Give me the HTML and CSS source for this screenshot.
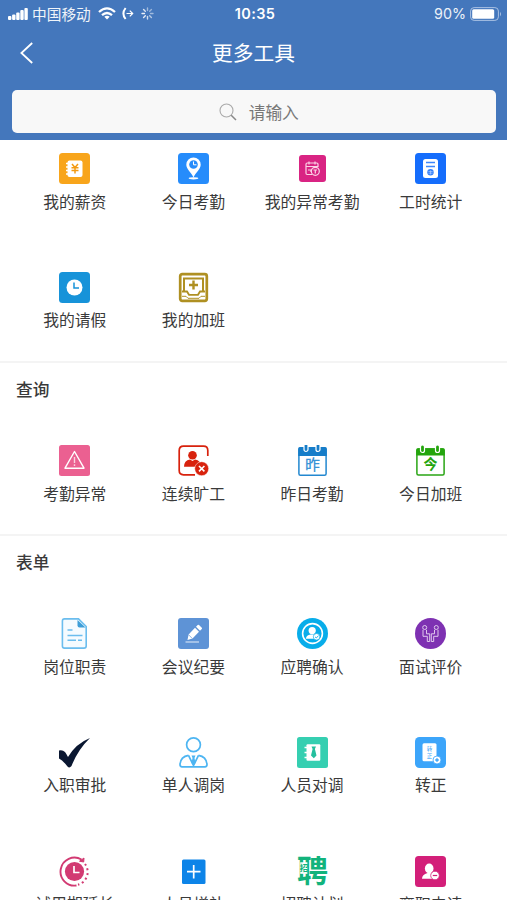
FILE: index.html
```html
<!DOCTYPE html>
<html lang="zh-CN">
<head>
<meta charset="utf-8">
<title>更多工具</title>
<link rel="stylesheet" href="styles.css">
</head>
<body>
<div class="app">
  <header class="header">
    <div class="status">
      <div class="status-left">
        <svg width="21" height="14" viewBox="0 0 21 14" fill="#fff"><rect x="0" y="9" width="3.400" height="4" rx="1"/><rect x="4.100" y="7.500" width="3.400" height="5.500" rx="1"/><rect x="8.200" y="5.500" width="3.400" height="7.500" rx="1"/><rect x="12.300" y="3" width="3.400" height="10" rx="1"/><rect x="16.400" y="1" width="3.400" height="12" rx="1"/></svg>
        <span class="carrier">中国移动</span>
        <svg class="wifi" width="18" height="13" viewBox="0 0 18 13" fill="none" stroke="#fff" stroke-width="2.300"><path d="M1 5Q9-2.200 17 5M4 8.200Q9 3.800 14 8.200"/><path d="M6.300 9.800Q9 7.700 11.700 9.800L9 12.600Z" fill="#fff" stroke="none"/></svg>
        <svg class="call" width="12" height="13" viewBox="0 0 12 13" fill="none" stroke="#fff" stroke-width="1.300"><path d="M3.600 1Q-.8 6.500 3.600 12" stroke-width="2"/><path d="M4.500 6.500H10.500M7.800 3.600L10.700 6.500L7.800 9.400" stroke-width="1.200"/></svg>
        <svg class="spin" width="13" height="13" viewBox="0 0 13 13" stroke="#fff" stroke-width="1.400" stroke-linecap="round"><path d="M6.500 1V3.500" opacity=".5"/><path d="M10.400 2.600L8.700 4.300" opacity=".45"/><path d="M12 6.500H9.500" opacity=".5"/><path d="M10.400 10.400L8.700 8.700" opacity=".6"/><path d="M6.500 12V9.500" opacity=".75"/><path d="M2.600 10.400L4.300 8.700" opacity=".85"/><path d="M1 6.500H3.500" opacity=".9"/><path d="M2.600 2.600L4.300 4.300" opacity=".8"/></svg>
      </div>
      <span class="time">10:35</span>
      <div class="status-right">
        <span class="percent">90%</span>
        <svg width="32" height="14" viewBox="0 0 32 14"><rect x=".6" y=".6" width="27.800" height="12.800" rx="3.500" fill="none" stroke="#a9c1e3" stroke-width="1"/><rect x="2.200" y="2.200" width="22" height="9.600" rx="1.500" fill="#fff"/><path d="M30 4.700Q32 7 30 9.300Z" fill="#a9c1e3"/></svg>
      </div>
    </div>
    <div class="nav">
      <svg class="back" width="14" height="22" viewBox="0 0 14 22" fill="none" stroke="#fff" stroke-width="1.800"><path d="M12.200 1L1.400 11L12.200 21"/></svg>
      <h1 class="title">更多工具</h1>
    </div>
    <div class="search">
      <svg width="18" height="18" viewBox="0 0 18 18" fill="none" stroke="#aaa" stroke-width="1.100"><circle cx="7.500" cy="7.500" r="6.500"/><path d="M12.200 12.200L17 17" stroke="#888" stroke-width="1.500"/></svg>
      <span>请输入</span>
    </div>
  </header>

  <main class="content">
    <section class="grid">
      <div class="tool"><svg class="icon" viewBox="0 0 31 31"><rect width="31" height="31" rx="3.500" fill="#f8a51b"/><rect x="8.500" y="7.500" width="15" height="16.500" rx="2" fill="#fff"/><path d="M7 10.500H10M7 14H10M7 17.500H10M7 21H10" stroke="#fff" stroke-width="1.600"/><path d="M13 11L16 14.500L19 11M12.500 14.800H19.500M12.500 17.400H19.500M16 14.500V20.500" fill="none" stroke="#f39a12" stroke-width="1.500"/></svg><span>我的薪资</span></div>
      <div class="tool"><svg class="icon" viewBox="0 0 31 31"><rect width="31" height="31" rx="3.500" fill="#268cfb"/><path d="M15.500 4.500A7.200 7.200 0 0 0 8.300 11.700C8.300 16 13 19 15.500 24.500C18 19 22.700 16 22.700 11.700A7.200 7.200 0 0 0 15.500 4.500Z" fill="#fff"/><circle cx="15.500" cy="11.500" r="4.300" fill="#268cfb"/><path d="M15.500 8.500V11.800H18.500" fill="none" stroke="#fff" stroke-width="1"/><ellipse cx="15.500" cy="25.300" rx="4.800" ry="1.100" fill="#fff"/></svg><span>今日考勤</span></div>
      <div class="tool"><svg class="icon" viewBox="0 0 31 31"><rect x="2" y="2" width="27" height="27" rx="3" fill="#d92483"/><g fill="none" stroke="#fbd3e6" stroke-width="1.200"><path d="M15 21.500H10.200Q9 21.500 9 20.300V11.200Q9 10 10.200 10H19.800Q21 10 21 11.200V14M9 13.500H21M12 8.500V11.500M18 8.500V11.500M11 17H14V19"/><circle cx="18.300" cy="18.300" r="4"/><path d="M16.500 17H20M18.300 17V20.500"/></g></svg><span>我的异常考勤</span></div>
      <div class="tool"><svg class="icon" viewBox="0 0 31 31"><rect width="31" height="31" rx="3.500" fill="#156dfc"/><rect x="8" y="6" width="15" height="19" rx="2.500" fill="#fff"/><path d="M11 9.500H20M11 13.500H20" stroke="#3d87fc" stroke-width="1.300"/><circle cx="15.500" cy="19.300" r="3.200" fill="#337ffa"/><path d="M13.400 18.500H17.600M13.400 20.200H17.600M15.500 17.400V21.500" stroke="#b9d4ff" stroke-width=".6"/></svg><span>工时统计</span></div>
      <div class="tool"><svg class="icon" viewBox="0 0 31 31"><rect width="31" height="31" rx="3.500" fill="#1793d9"/><circle cx="15.500" cy="15.500" r="8" fill="#fff"/><path d="M15 10.500V16H20" fill="none" stroke="#1793d9" stroke-width="1.500"/></svg><span>我的请假</span></div>
      <div class="tool"><svg class="icon" viewBox="0 0 31 31" fill="none" stroke="#af9022"><rect x="2.200" y="2.200" width="26.600" height="26.600" rx="2" stroke-width="2.700"/><path d="M6 19V6.500H25V19" stroke-width="2"/><path d="M4 19.500H9L11 22.800H20L22 19.500H27" stroke-width="1.800"/><path d="M4 24.300H8L10 26.300H21L23 24.300H27" stroke-width="1"/><path d="M15.500 8.500V17.500M11 13H20" stroke-width="2.400"/></svg><span>我的加班</span></div>
    </section>

    <section class="group">
      <h2 class="heading">查询</h2>
      <div class="grid">
        <div class="tool"><svg class="icon" viewBox="0 0 31 31"><rect width="31" height="31" rx="2.500" fill="#eb6091"/><path d="M15.500 6.500L25 23.200H6Z" fill="none" stroke="#fff" stroke-width="1.400" stroke-linejoin="round"/><path d="M15.500 12V18M15.500 19.300V21" stroke="#fbd1df" stroke-width="1.400"/></svg><span>考勤异常</span></div>
        <div class="tool"><svg class="icon" viewBox="0 0 31 31"><path d="M17 29.800H5.500Q1.200 29.800 1.200 25.500V5.500Q1.200 1.200 5.500 1.200H25.500Q29.800 1.200 29.800 5.500V11" fill="none" stroke="#d8220d" stroke-width="1.700"/><circle cx="14.500" cy="10.200" r="4.300" fill="#d8220d"/><path d="M6 21.800Q6 15.500 12 14.500L14.500 16L17 14.500Q23 15.500 23 21.800Z" fill="#d8220d"/><circle cx="23.700" cy="23.700" r="7" fill="#d8220d" stroke="#fff" stroke-width=".5"/><path d="M21 21L26.400 26.400M26.400 21L21 26.400" stroke="#fff" stroke-width="1.600"/></svg><span>连续旷工</span></div>
        <div class="tool"><svg class="icon" viewBox="0 0 31 31"><rect x="1.900" y="3" width="27.200" height="27.200" rx="1.500" fill="#fff" stroke="#2388d0" stroke-width="1.500"/><path d="M1.200 11V4Q1.200 2 3 2H28Q29.800 2 29.800 4V11Z" fill="#167dc9"/><g fill="#167dc9" stroke="#fff" stroke-width="1.200"><rect x="7" y="-1.500" width="4" height="8" rx="2"/><rect x="19" y="-1.500" width="4" height="8" rx="2"/></g><text x="15.500" y="24.500" text-anchor="middle" class="glyph medium" font-size="15" fill="#3a94d6">昨</text></svg><span>昨日考勤</span></div>
        <div class="tool"><svg class="icon" viewBox="0 0 31 31"><rect x="1.900" y="4" width="27.200" height="26" rx="1.500" fill="#fff" stroke="#2aa515" stroke-width="1.500"/><path d="M1.200 10.500V5.500Q1.200 3.300 3 3.300H28Q29.800 3.300 29.800 5.500V10.500Z" fill="#24a50d"/><g fill="#24a50d" stroke="#fff" stroke-width="1.200"><rect x="5.500" y="0" width="4" height="7.500" rx="2"/><rect x="20.500" y="0" width="4" height="7.500" rx="2"/></g><text x="15.500" y="24.300" text-anchor="middle" class="glyph bold" font-size="14" fill="#24a50d">今</text></svg><span>今日加班</span></div>
      </div>
    </section>

    <section class="group">
      <h2 class="heading">表单</h2>
      <div class="grid">
        <div class="tool"><svg class="icon" viewBox="0 0 31 31" fill="none" stroke="#6bbdee"><path d="M5.500 .9H19.500L27.200 8.500V28Q27.200 30.100 25 30.100H5.500Q3.400 30.100 3.400 28V3Q3.400 .9 5.500 .9Z" fill="#f5fbff" stroke-width="1.600"/><path d="M18.500 2L26.500 9.500H20.500Q18.500 9.500 18.500 7.500Z" fill="#3e9ed8" stroke="none"/><path d="M8.500 12H13.500M8.500 17.500H23.500M8.500 22.300H17M19 22.300H23" stroke-width="1.500"/></svg><span>岗位职责</span></div>
        <div class="tool"><svg class="icon" viewBox="0 0 31 31"><rect width="31" height="31" rx="3" fill="#5e93d6"/><path d="M9.500 22L10.600 16.500L17 9.800L21 13.800L14.500 20.500ZM18 8.800L19.700 7Q20.300 6.500 21 7L23.800 9.800Q24.300 10.500 23.800 11L22 12.800Z" fill="#fff"/><path d="M10.500 16.700L14.300 20.500" stroke="#5e93d6" stroke-width=".7"/><path d="M7.500 24H21" stroke="#c7daf2" stroke-width="1.300"/></svg><span>会议纪要</span></div>
        <div class="tool"><svg class="icon" viewBox="0 0 31 31"><circle cx="15.500" cy="15.500" r="15.500" fill="#08adea"/><circle cx="15.500" cy="15.500" r="9.900" fill="none" stroke="#fff" stroke-width="1.600"/><circle cx="15.200" cy="12.600" r="3.600" fill="#fff"/><path d="M8.800 20.800Q9.500 16.800 13.500 16.500H17Q19 16.500 20 17.800L19 20.800Z" fill="#fff"/><circle cx="19.600" cy="18.800" r="3.300" fill="#fff" stroke="#08adea" stroke-width=".7"/><path d="M18 18.800L19.300 20L21.500 17.600" fill="none" stroke="#08adea" stroke-width=".9"/></svg><span>应聘确认</span></div>
        <div class="tool"><svg class="icon" viewBox="0 0 31 31"><circle cx="15.500" cy="15.500" r="15.500" fill="#7e31b2"/><g fill="none" stroke="#e0c9ed" stroke-width="1"><circle cx="9.700" cy="9.500" r="2"/><circle cx="21.300" cy="9.500" r="2"/><path d="M8 11.800V18.300H12.300V23.500H14.700V15.800H11.500V11.800M23 11.800V18.300H18.700V23.500H16.300V15.800H19.500V11.800"/></g></svg><span>面试评价</span></div>
        <div class="tool"><svg class="icon" viewBox="0 0 31 31"><path d="M0 13.500Q3.500 12.500 6 15Q7.500 17 9 20Q17 6.500 31 1Q19 12.500 12.500 29Q10.500 31.500 8.500 29.500Q3.500 23 0 21.500Z" fill="#0a1731"/></svg><span>入职审批</span></div>
        <div class="tool"><svg class="icon" viewBox="0 0 31 31" fill="none" stroke="#4db5f2" stroke-width="1.700"><circle cx="15.500" cy="7.800" r="6.900"/><path d="M10.500 18.300Q2.500 19.500 2 27.500Q2 29.800 4 29.800H27Q29 29.800 29 27.500Q28.500 19.500 20.500 18.300M10.500 18.300L15.500 28.500L20.500 18.300" stroke-linejoin="round"/><path d="M13.500 18.500H17.500L16.500 21L17.500 26L15.500 28.500L13.500 26L14.500 21Z" fill="#4db5f2" stroke="none"/></svg><span>单人调岗</span></div>
        <div class="tool"><svg class="icon" viewBox="0 0 31 31"><rect width="31" height="31" rx="2.500" fill="#35cfb1"/><rect x="9.500" y="7.300" width="13.800" height="16.500" rx="1" fill="#fff"/><path d="M7.500 10.500H11M7.500 15.500H11M7.500 20.500H11" stroke="#fff" stroke-width="1.700"/><path d="M14.500 9.500H19L17.900 12L19.500 18.500L16.800 21.200L14 18.500L15.600 12Z" fill="#25bf9e"/></svg><span>人员对调</span></div>
        <div class="tool"><svg class="icon" viewBox="0 0 31 31"><rect width="31" height="31" rx="4.500" fill="#3ca5fa"/><rect x="7.500" y="6.300" width="14" height="18" rx="1.500" fill="#fff"/><text x="14.500" y="14" text-anchor="middle" class="glyph" font-size="5.500" fill="#3ca5fa">转</text><text x="14.500" y="21" text-anchor="middle" class="glyph" font-size="5.500" fill="#3ca5fa">正</text><circle cx="22" cy="23" r="4" fill="#fff" stroke="#3ca5fa" stroke-width=".8"/><path d="M22 21.200V24.800M20.200 23H23.800" stroke="#3ca5fa" stroke-width="1.500"/></svg><span>转正</span></div>
        <div class="tool"><svg class="icon" viewBox="0 0 31 31"><path d="M17.500 29.500A14 14 0 1 1 22.500 3.500" fill="none" stroke="#d23a72" stroke-width="1.900"/><path d="M25 2L24.700 6L20.500 5.200Z" fill="#d23a72" stroke="#d23a72"/><path d="M26 8A13.200 13.200 0 0 1 19 28.700" fill="none" stroke="#d23a72" stroke-width="2" stroke-dasharray="2 2.800"/><circle cx="15.500" cy="15.500" r="9.600" fill="#d23a72"/><path d="M15 10V16.500H20.500" fill="none" stroke="#fff" stroke-width="1.700"/></svg><span>试用期延长</span></div>
        <div class="tool"><svg class="icon" viewBox="0 0 31 31"><rect x="4" y="3.500" width="23.500" height="24.500" rx="1.500" fill="#0d84e8"/><path d="M15.700 9V22.500M9 15.700H22.500" stroke="#fff" stroke-width="1.700"/></svg><span>人员增补</span></div>
        <div class="tool"><svg class="icon" viewBox="0 0 31 31"><text x="15.500" y="26" text-anchor="middle" class="glyph bold" font-size="31" fill="#12b37c">聘</text><rect x="3.200" y="6.300" width="7.200" height="11.500" fill="#fff"/><text x="6.900" y="15.300" text-anchor="middle" class="glyph bold" font-size="8.500" fill="#12b37c">招</text></svg><span>招聘计划</span></div>
        <div class="tool"><svg class="icon" viewBox="0 0 31 31"><rect width="31" height="31" rx="3.500" fill="#d31f79"/><ellipse cx="14.200" cy="12.500" rx="4.300" ry="5" fill="#fff"/><path d="M7 22.800Q7 18.500 12.500 17H16Q20 18 21 20L20 22.800Z" fill="#fff"/><circle cx="20" cy="19.500" r="4.300" fill="#fff" stroke="#d31f79" stroke-width=".8"/><path d="M17.800 19.500H22.200" stroke="#d31f79" stroke-width="1.200"/></svg><span>离职申请</span></div>
      </div>
    </section>
  </main>
</div>
</body>
</html>
```
FILE: styles.css
```css
* { box-sizing: border-box; }

body {
  margin: 0;
  background: #fff;
  color: #3a3a3a;
  font-family: "Noto Sans CJK SC", sans-serif;
}

.app {
  display: flex;
  flex-direction: column;
  height: 900px;
  overflow: hidden;
}

svg { display: block; flex: none; }

.header {
  flex: none;
  height: 140px;
  background: #4477bc;
  color: #fff;
}

.status {
  display: grid;
  grid-template-columns: 1fr auto 1fr;
  align-items: center;
  height: 27px;
  padding: 0 5px 0 8px;
}

.status-left,
.status-right {
  display: flex;
  align-items: center;
}

.status-right { justify-content: flex-end; gap: 4px; }

.carrier { margin-left: 3px; font-size: 14.7px; line-height: 20px; opacity: .92; }
.wifi { margin-left: 7px; }
.call { margin-left: 6px; }
.spin { margin-left: 7px; }

.time {
  font: 600 14.5px/20px Inter, sans-serif;
  letter-spacing: .4px;
}

.percent { font: 400 14.3px/20px Inter, sans-serif; opacity: .9; }

.nav {
  display: grid;
  grid-template-columns: 40px 1fr 40px;
  align-items: center;
  height: 49px;
}

.back { margin: 2px 0 0 20px; }

.title {
  margin: 0;
  font-size: 20.7px;
  font-weight: 400;
  line-height: 30px;
  text-align: center;
}

.search {
  display: flex;
  align-items: center;
  justify-content: center;
  gap: 12px;
  height: 43px;
  margin: 14px 11.5px 0 12px;
  padding-left: 10px;
  border-radius: 5px;
  background: #f8f8f8;
  color: #777;
  font-size: 16.7px;
}

.content {
  flex: 1;
  min-height: 0;
  overflow: hidden;
}

.content > .grid { margin-top: -16.6px; }

.grid {
  display: grid;
  grid-template-columns: repeat(4, 1fr);
  grid-auto-rows: 118.6px;
  padding: 0 17px 0 15.5px;
}

.tool {
  display: flex;
  flex-direction: column;
  align-items: center;
  padding-top: 29.8px;
  font-size: 15.8px;
  line-height: 20px;
  white-space: nowrap;
}

.icon {
  width: 31px;
  height: 31px;
  margin-bottom: 7.5px;
}

.group { border-top: 2px solid #f4f4f4; }

.heading {
  height: 52.7px;
  margin: 0;
  padding: 14px 16px 0;
  font-size: 16.7px;
  font-weight: 500;
  line-height: 25px;
}

.glyph { font-family: "Noto Sans CJK SC", sans-serif; }
.medium { font-weight: 500; }
.bold { font-weight: 700; }
```
